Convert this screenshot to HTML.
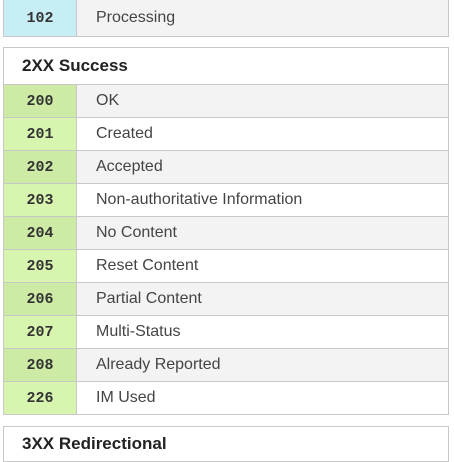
<!DOCTYPE html><html><head><style>
body{margin:0;width:454px;height:454px;overflow:hidden;background:#fff;font-family:"Liberation Sans",sans-serif;}
.box{position:absolute;left:3px;width:444px;border:1px solid #c8c8c8;background:#fff}
.row{height:32px;border-top:1px solid #c8c8c8;display:flex;align-items:center}
.row:first-child{border-top:none}
.c{width:72px;height:100%;display:flex;align-items:center;justify-content:center;font:bold 15px "Liberation Mono",monospace;color:#333;border-right:1px solid #c8c8c8}
.t{padding-left:19px;font-size:16px;color:#444;height:100%;display:flex;align-items:center;flex:1}
.g .c{background:#d7f5ae}.g.a .c{background:#cdeba5}
.a .t{background:#f3f3f3}
.h{height:36px;font-weight:bold;font-size:17px;color:#222;padding-left:18px;display:flex;align-items:center;border-bottom:1px solid #c8c8c8}
</style></head><body>
<div class="box" style="top:-1px"><div class="row a" style="height:36px;border-top:none"><div class="c" style="background:#c8eef5">102</div><div class="t">Processing</div></div></div>
<div class="box" style="top:47px">
<div class="h">2XX Success</div>
<div class="row g a" style="border-top:none"><div class="c">200</div><div class="t">OK</div></div>
<div class="row g"><div class="c">201</div><div class="t">Created</div></div>
<div class="row g a"><div class="c">202</div><div class="t">Accepted</div></div>
<div class="row g"><div class="c">203</div><div class="t">Non-authoritative Information</div></div>
<div class="row g a"><div class="c">204</div><div class="t">No Content</div></div>
<div class="row g"><div class="c">205</div><div class="t">Reset Content</div></div>
<div class="row g a"><div class="c">206</div><div class="t">Partial Content</div></div>
<div class="row g"><div class="c">207</div><div class="t">Multi-Status</div></div>
<div class="row g a"><div class="c">208</div><div class="t">Already Reported</div></div>
<div class="row g"><div class="c">226</div><div class="t">IM Used</div></div>
</div>
<div class="box" style="top:426px"><div class="h" style="height:34px;border:none">3XX Redirectional</div></div>
</body></html>
